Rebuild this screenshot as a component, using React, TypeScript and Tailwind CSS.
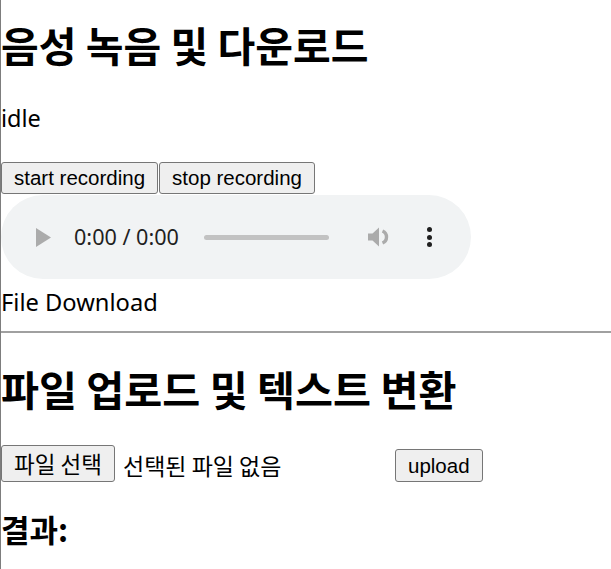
import React from 'react';

const kr = "font-['Noto_Sans_CJK_KR',sans-serif]";
const latin = "font-['Noto_Sans',sans-serif]";
const btn =
  "border border-[#767676] bg-[#efefef] rounded-[3px] text-black font-['Liberation_Sans',Arial,sans-serif]";

function AudioBar() {
  return (
    <div className="w-[470px] h-[84px] rounded-full bg-[#f1f3f4] flex items-center">
      <svg width="15" height="19" viewBox="0 0 15 19" className="ml-[35px] shrink-0">
        <polygon points="0,0 15,9.5 0,19" fill="#ababab" />
      </svg>
      <span className={`${latin} ml-[23px] text-[21.6px] leading-none text-[#1f1f1f]`}>0:00 / 0:00</span>
      <div className="ml-[25px] w-[125px] h-[5px] rounded-full bg-[#c2c2c2]" />
      <svg width="24" height="22" viewBox="0 0 24 22" className="ml-[39px] shrink-0">
        <path d="M0 7.5 H4.5 L11 1.5 V20.5 L4.5 14.5 H0 Z" fill="#ababab" />
        <path d="M14.5 5 A6.5 6.5 0 0 1 14.5 17" stroke="#ababab" strokeWidth="3.4" fill="none" />
      </svg>
      <div className="ml-[35px] flex flex-col gap-[2.5px]">
        <span className="w-[5px] h-[5px] rounded-full bg-[#1f1f1f]" />
        <span className="w-[5px] h-[5px] rounded-full bg-[#1f1f1f]" />
        <span className="w-[5px] h-[5px] rounded-full bg-[#1f1f1f]" />
      </div>
    </div>
  );
}

export default function App() {
  return (
    <div className="min-h-screen border-l border-[#7d7d7d] bg-white text-black">
      <h1 className={`${kr} pt-[22px] text-[41px] font-bold leading-[45px]`}>음성 녹음 및 다운로드</h1>
      <p className={`${latin} mt-[35px] text-[23.5px] leading-[32px]`}>idle</p>

      <div className="mt-[28px] flex gap-[1px]">
        <button className={`${btn} px-[12px] py-[3px] text-[20.5px] leading-[24px]`}>start recording</button>
        <button className={`${btn} px-[12px] py-[3px] text-[20.5px] leading-[24px]`}>stop recording</button>
      </div>

      <div className="mt-[1px]">
        <AudioBar />
      </div>

      <div className={`${latin} mt-[7px] text-[23.7px] leading-[32px]`}>File Download</div>

      <hr className="mt-[13px] border-0 h-[2px] bg-[#a0a0a0]" />

      <h1 className={`${kr} mt-[33px] text-[41.3px] font-bold leading-[45px]`}>파일 업로드 및 텍스트 변환</h1>

      <div className="mt-[34px] flex items-end">
        <button className={`${btn} ${kr} w-[114px] py-[3px] text-[22.5px] leading-[29px]`}>파일 선택</button>
        <span className={`${kr} ml-[8px] w-[272px] text-[23px] leading-[33px]`}>선택된 파일 없음</span>
        <button className={`${btn} px-[12px] py-[3px] text-[20.5px] leading-[25px]`}>upload</button>
      </div>

      <h3 className={`${kr} mt-[28px] text-[31px] font-bold leading-[38px]`}>결과:</h3>
    </div>
  );
}
